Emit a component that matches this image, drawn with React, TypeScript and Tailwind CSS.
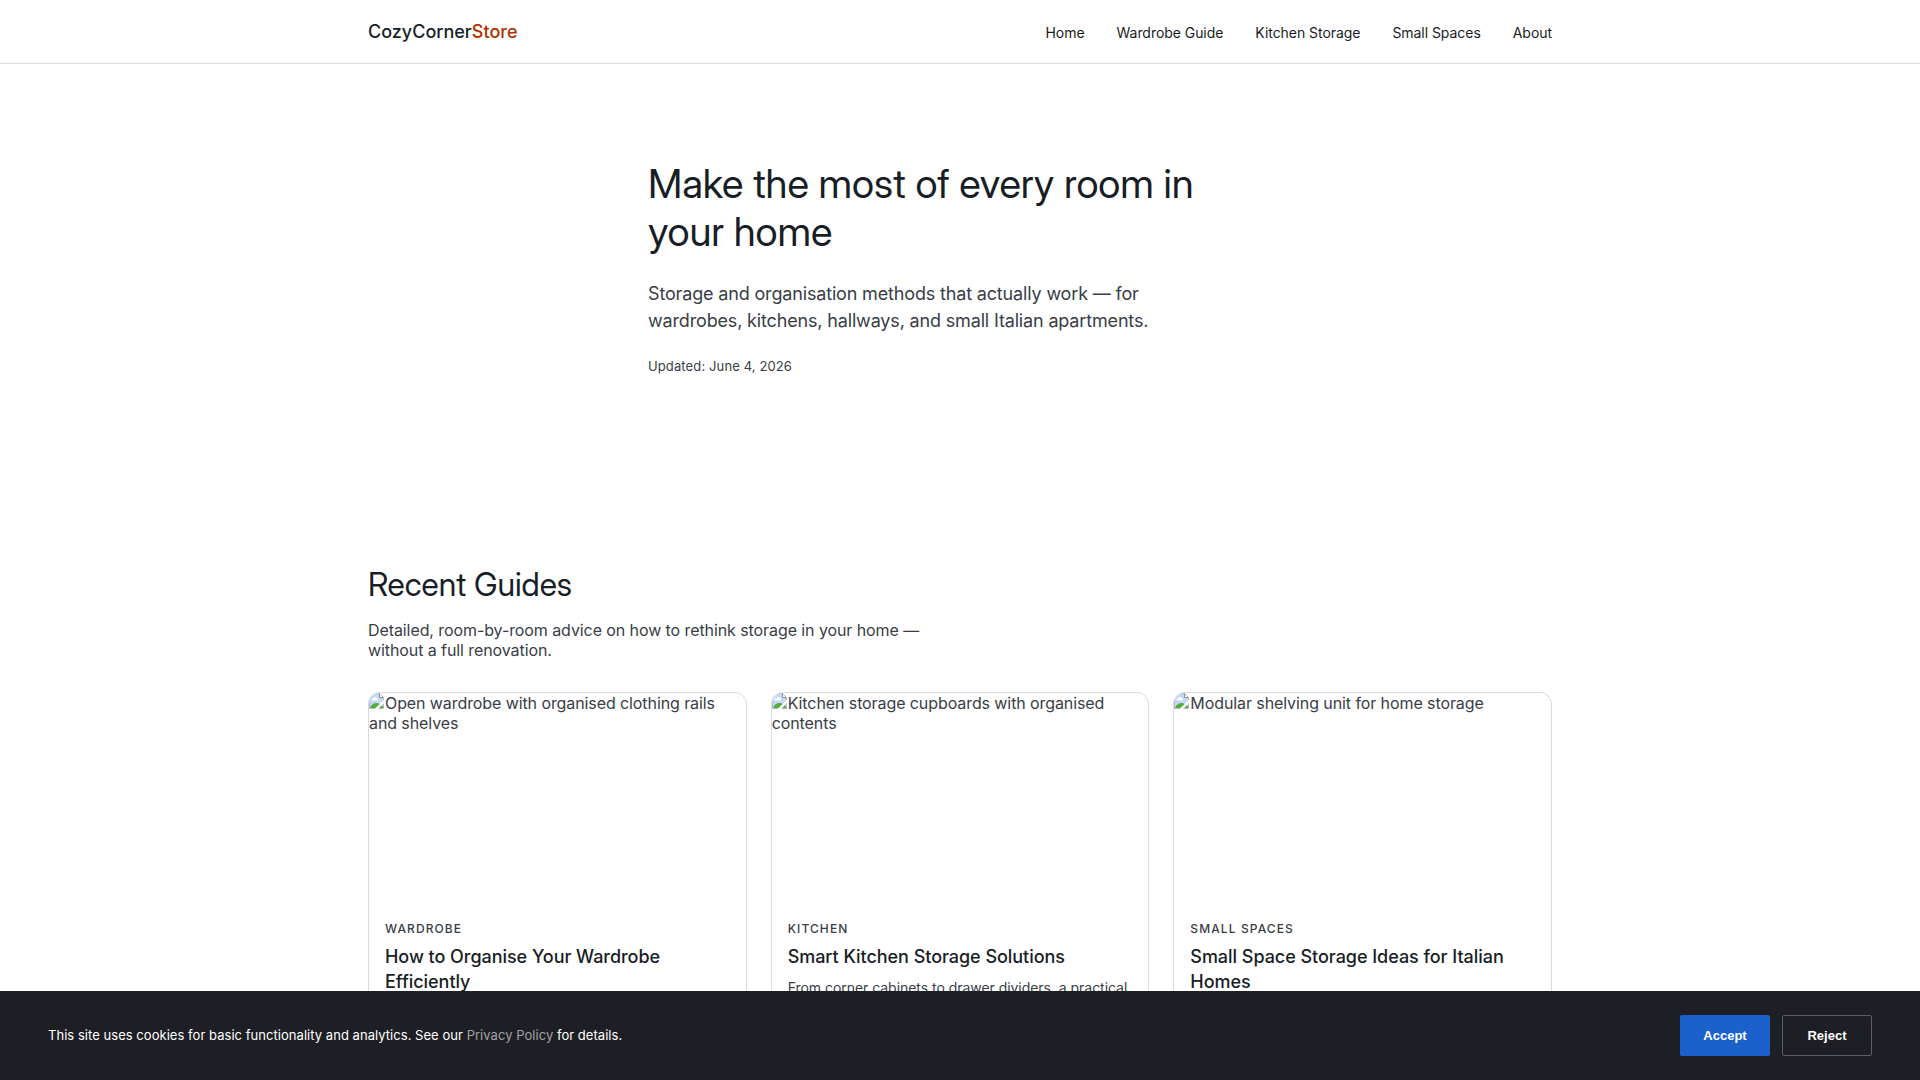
import React from 'react';

interface Guide {
    category: string;
    title: string;
    excerpt: string;
    alt: string;
}

const NAV_LINKS = ['Home', 'Wardrobe Guide', 'Kitchen Storage', 'Small Spaces', 'About'];

const GUIDES: Guide[] = [
    {
        category: 'Wardrobe',
        title: 'How to Organise Your Wardrobe Efficiently',
        excerpt: '',
        alt: 'Open wardrobe with organised clothing rails and shelves',
    },
    {
        category: 'Kitchen',
        title: 'Smart Kitchen Storage Solutions',
        excerpt: 'From corner cabinets to drawer dividers, a practical',
        alt: 'Kitchen storage cupboards with organised contents',
    },
    {
        category: 'Small Spaces',
        title: 'Small Space Storage Ideas for Italian Homes',
        excerpt: '',
        alt: 'Modular shelving unit for home storage',
    },
];

// Small torn-page glyph shown in front of the alt text
const MissingImageIcon = () => (
    <svg width="16" height="16" viewBox="0 0 16 16" className="inline-block align-baseline">
        <path d="M0.5 0.5h10l4 4V7L6 15.500H0.500z" fill="#c3d7f9" />
        <path d="M2.500 7C2.500 5.700 3.400 5 4.500 5.200 5 3.500 7.700 3.600 8 5.300c1.300 0 1.700 1.700.5 2.200H3C2.700 7.500 2.500 7.300 2.500 7z" fill="#fff" />
        <path d="M1 15c1-2.800 3.300-5 6-5 1.500 0 2.600.4 3.500 1L6.500 15z" fill="#54ad36" />
        <path d="M10.500.5v4h4z" fill="#fff" stroke="#8c8f92" />
        <path d="M.5 15.500V.5h10l4 4V7" fill="none" stroke="#b4b9c0" />
        <path d="M14.500 10.500v5H9.500z" fill="#c3d7f9" />
        <path d="M12.500 12.500l1.500 1v1.500h-3.500z" fill="#54ad36" />
        <path d="M.5 15.500h5.500M14.500 10.500v5h-5" fill="none" stroke="#b4b9c0" />
    </svg>
);

const Header = () => (
    <header className="h-16 border-b border-[#d9dadb] bg-white">
        <div className="mx-auto flex h-full w-[1184px] items-center justify-between">
            <a className="text-lg font-medium text-[#181d26]">
                CozyCorner<span className="text-[#b12f00]">Store</span>
            </a>
            <nav className="flex gap-8 pt-0.5 text-sm tracking-[-0.05px] text-[#181d26]">
                {NAV_LINKS.map((link) => (
                    <a key={link}>{link}</a>
                ))}
            </nav>
        </div>
    </header>
);

const GuideCard = ({ guide }: { guide: Guide }) => (
    <article className="h-[460px] overflow-hidden rounded-xl border border-[#d9dadb] bg-white">
        <div className="h-[220px] leading-5 tracking-[-0.09px]">
            <MissingImageIcon />
            {guide.alt}
        </div>
        <div className="p-4 pt-2">
            <p className="mb-[7px] text-xs leading-4 font-medium tracking-[1.1px] uppercase">{guide.category}</p>
            <h3 className="mb-[9px] text-lg leading-[25px] font-medium tracking-[-0.04px] text-[#181d26]">{guide.title}</h3>
            {guide.excerpt && <p className="text-sm tracking-[-0.04px]">{guide.excerpt}</p>}
        </div>
    </article>
);

const CookieBanner = () => (
    <div className="fixed inset-x-0 bottom-0 flex h-[89px] items-center justify-between bg-[#1e1f24] px-12 text-[13px] text-white">
        <p className="tracking-[0.04px]">
            This site uses cookies for basic functionality and analytics. See our{' '}
            <a className="text-[#a2a3a5]">Privacy Policy</a> for details.
        </p>
        <div className="flex gap-3 font-['Liberation_Sans',Arial,sans-serif] font-bold">
            <button className="h-[41px] w-[90px] rounded-xs bg-[#1c61cb]">Accept</button>
            <button className="h-[41px] w-[90px] rounded-xs border border-[#5c5e62]">Reject</button>
        </div>
    </div>
);

export default function App() {
    return (
        <div className="h-screen overflow-hidden bg-white font-['Inter',sans-serif] text-[#393d46]">
            <Header />
            <main>
                <section className="mx-auto h-[501px] w-[624px] pt-24">
                    <h1 className="mb-6 w-[600px] font-['Inter_Display','Inter',sans-serif] text-[40px] leading-[48px] font-normal tracking-[-0.11px] text-[#181d26]">
                        Make the most of every room in your home
                    </h1>
                    <p className="mb-6 w-[520px] text-lg leading-[27px] tracking-[-0.16px]">
                        Storage and organisation methods that actually work — for wardrobes, kitchens, hallways, and small Italian apartments.
                    </p>
                    <p className="text-[13px] leading-4 tracking-[0.12px]">Updated: June 4, 2026</p>
                </section>
                <section className="mx-auto w-[1184px]">
                    <h2 className="mb-4 font-['Inter_Display','Inter',sans-serif] text-[32px] leading-[39px] font-normal text-[#181d26]">
                        Recent Guides
                    </h2>
                    <p className="mb-8 w-[560px] leading-5 tracking-[-0.085px]">
                        Detailed, room-by-room advice on how to rethink storage in your home — without a full renovation.
                    </p>
                    <div className="grid grid-cols-3 gap-6">
                        {GUIDES.map((guide) => (
                            <GuideCard key={guide.category} guide={guide} />
                        ))}
                    </div>
                </section>
            </main>
            <CookieBanner />
        </div>
    );
}
